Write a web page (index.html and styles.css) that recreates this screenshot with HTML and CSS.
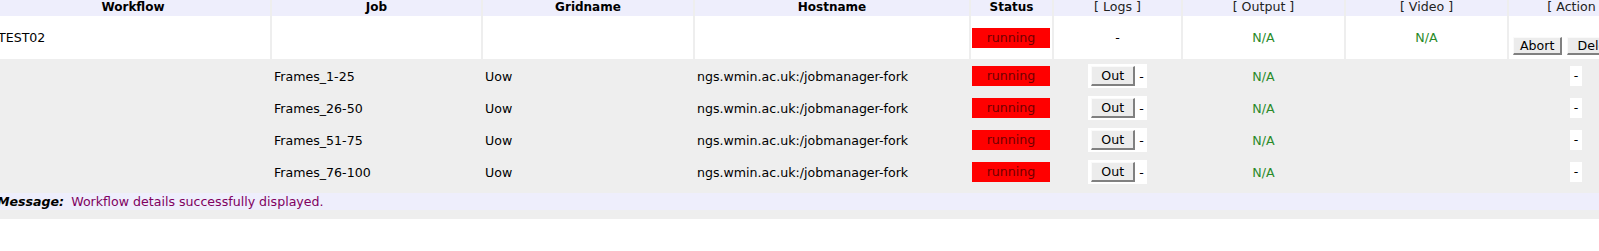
FILE: index.html
```html
<!DOCTYPE html>
<html lang="en">
<head>
    <meta charset="UTF-8">
    <title>Workflow details</title>
    <link rel="stylesheet" href="styles.css">
</head>
<body>
    <div class="page">
        <table class="jobs">
            <thead>
                <tr>
                    <th class="c-wf">Workflow</th>
                    <th class="c-job">Job</th>
                    <th class="c-grid">Gridname</th>
                    <th class="c-host">Hostname</th>
                    <th class="c-status">Status</th>
                    <th class="c-logs plain">[ Logs ]</th>
                    <th class="c-out plain">[ Output ]</th>
                    <th class="c-video plain">[ Video ]</th>
                    <th class="c-action plain">[ Action ]</th>
                </tr>
            </thead>
            <tbody>
                <tr class="wf-row">
                    <td>TEST02</td>
                    <td></td>
                    <td></td>
                    <td></td>
                    <td class="status"><span class="running">running</span></td>
                    <td class="center">-</td>
                    <td class="center na">N/A</td>
                    <td class="center na">N/A</td>
                    <td class="action">
                        <div class="action-btns"><button class="btn">Abort</button><button class="btn">Delete</button></div>
                    </td>
                </tr>
                <tr class="job-row">
                    <td></td>
                    <td>Frames_1-25</td>
                    <td>Uow</td>
                    <td>ngs.wmin.ac.uk:/jobmanager-fork</td>
                    <td class="status"><span class="running">running</span></td>
                    <td class="center"><span class="logbox"><button class="btn">Out</button>-</span></td>
                    <td class="center na">N/A</td>
                    <td></td>
                    <td class="center"><span class="dash">-</span></td>
                </tr>
                <tr class="job-row">
                    <td></td>
                    <td>Frames_26-50</td>
                    <td>Uow</td>
                    <td>ngs.wmin.ac.uk:/jobmanager-fork</td>
                    <td class="status"><span class="running">running</span></td>
                    <td class="center"><span class="logbox"><button class="btn">Out</button>-</span></td>
                    <td class="center na">N/A</td>
                    <td></td>
                    <td class="center"><span class="dash">-</span></td>
                </tr>
                <tr class="job-row">
                    <td></td>
                    <td>Frames_51-75</td>
                    <td>Uow</td>
                    <td>ngs.wmin.ac.uk:/jobmanager-fork</td>
                    <td class="status"><span class="running">running</span></td>
                    <td class="center"><span class="logbox"><button class="btn">Out</button>-</span></td>
                    <td class="center na">N/A</td>
                    <td></td>
                    <td class="center"><span class="dash">-</span></td>
                </tr>
                <tr class="job-row">
                    <td></td>
                    <td>Frames_76-100</td>
                    <td>Uow</td>
                    <td>ngs.wmin.ac.uk:/jobmanager-fork</td>
                    <td class="status"><span class="running">running</span></td>
                    <td class="center"><span class="logbox"><button class="btn">Out</button>-</span></td>
                    <td class="center na">N/A</td>
                    <td></td>
                    <td class="center"><span class="dash">-</span></td>
                </tr>
            </tbody>
        </table>
        <div class="message">
            <b><i>Message:</i></b>
            <span class="msg-text">Workflow details successfully displayed.</span>
        </div>
    </div>
</body>
</html>
```

FILE: styles.css
```css
html, body {
    margin: 0;
    padding: 0;
    background-color: white;
    overflow: hidden;
}

body {
    font-family: "DejaVu Sans", Verdana, sans-serif;
    font-size: 12.6px;
    color: black;
}

.page {
    margin-left: -6px;
    width: 1650px;
    background-color: #eeeeee;
    padding-bottom: 9px;
}

.jobs {
    table-layout: fixed;
    width: 1650px;
    border-collapse: separate;
    border-spacing: 2px 0;
}

th {
    height: 16px;
    padding: 0;
    background-color: #eeeefc;
    font-size: 12px;
    font-weight: bold;
    text-align: center;
    line-height: 14px;
    vertical-align: top;
}

th.plain {
    font-weight: normal;
    font-size: 12.6px;
    color: #222;
}

.c-wf { width: 274px; }
.c-job { width: 209px; }
.c-grid { width: 210px; }
.c-host { width: 274px; }
.c-status { width: 81px; }
.c-logs { width: 127px; }
.c-out { width: 161px; }
.c-video { width: 161px; }
.c-action { width: 134px; }

td {
    padding: 0 0 0 2px;
    white-space: nowrap;
    overflow: hidden;
    vertical-align: middle;
}

.wf-row td {
    height: 43px;
    background-color: white;
}

.job-row td {
    height: 30px;
    padding-top: 2px;
}

td.center {
    text-align: center;
    padding-left: 0;
}

td.status {
    padding-left: 1px;
    padding-right: 2px;
}

.running {
    display: block;
    height: 20px;
    line-height: 20px;
    background-color: red;
    color: #700000;
    text-align: center;
}

.na {
    color: #2a8a2a;
}

.wf-row td.action {
    vertical-align: top;
    padding: 0 0 0 4px;
}

.action-btns {
    margin-top: 21px;
    display: flex;
    gap: 5px;
}

.btn {
    font-family: "DejaVu Sans", Verdana, sans-serif;
    font-size: 12.6px;
    color: black;
    background-color: #ececec;
    border-style: solid;
    border-width: 1px 2px 2px 1px;
    border-color: #fafafa #808080 #808080 #fafafa;
    margin: 0;
    padding: 0 6px;
    height: 18px;
    line-height: 14px;
}

.action-btns .btn + .btn {
    padding-left: 9px;
}

.logbox {
    display: inline-flex;
    align-items: center;
    gap: 4px;
    background-color: white;
    padding: 2px 3px 2px 3px;
}

.logbox .btn {
    width: 44px;
    height: 20px;
}

.dash {
    display: inline-block;
    width: 12px;
    height: 20px;
    line-height: 20px;
    background-color: white;
}

.message {
    margin-top: 6px;
    height: 17px;
    line-height: 17px;
    padding-left: 3px;
    background-color: #eeeefc;
}

.msg-text {
    margin-left: 3px;
    color: #800060;
}
```
